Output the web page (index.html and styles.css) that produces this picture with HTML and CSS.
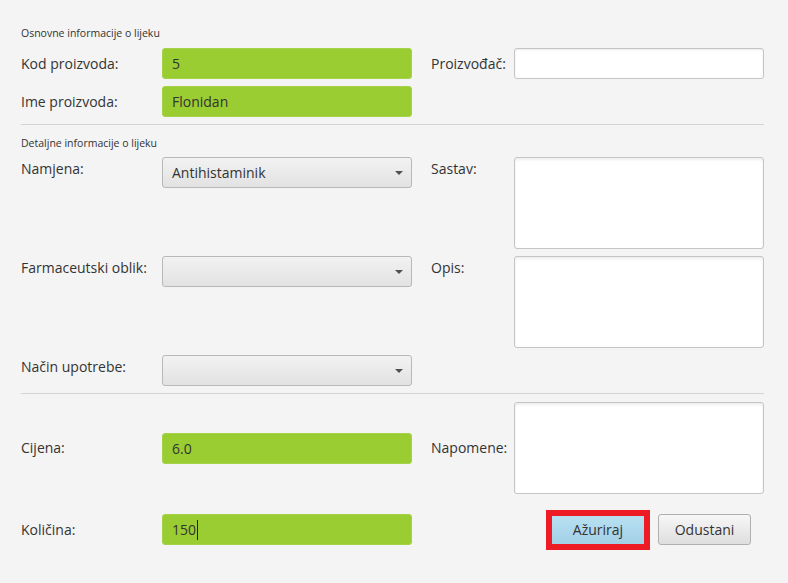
FILE: index.html
```html
<!DOCTYPE html>
<html lang="hr">
<head>
<meta charset="utf-8">
<title>Lijek</title>
<link rel="stylesheet" href="styles.css">
</head>
<body>
<div class="page">
  <div class="section-title first">Osnovne informacije o lijeku</div>
  <div class="grid basic">
    <div class="label mid c1 r1">Kod proizvoda:</div>
    <div class="field green c2 r1">5</div>
    <div class="label mid c4 r1">Proizvođač:</div>
    <div class="field white c5 r1"></div>
    <div class="label mid c1 r2">Ime proizvoda:</div>
    <div class="field green c2 r2">Flonidan</div>
  </div>
  <div class="sep"></div>
  <div class="section-title">Detaljne informacije o lijeku</div>
  <div class="grid detail">
    <div class="label top c1 r1">Namjena:</div>
    <div class="combo c2 r1"><span>Antihistaminik</span><i class="arrow"></i></div>
    <div class="label top c4 r1">Sastav:</div>
    <div class="area c5 r1"></div>
    <div class="label top c1 r2">Farmaceutski oblik:</div>
    <div class="combo c2 r2"><span></span><i class="arrow"></i></div>
    <div class="label top c4 r2">Opis:</div>
    <div class="area c5 r2"></div>
    <div class="label top c1 r3">Način upotrebe:</div>
    <div class="combo c2 r3"><span></span><i class="arrow"></i></div>
  </div>
  <div class="sep second"></div>
  <div class="grid extra">
    <div class="label mid c1 r1">Cijena:</div>
    <div class="field green c2 r1 center">6.0</div>
    <div class="label mid c4 r1">Napomene:</div>
    <div class="area c5 r1"></div>
    <div class="label mid c1 r2">Količina:</div>
    <div class="field green c2 r2">150<span class="caret"></span></div>
    <div class="buttons r2">
      <span class="highlight"><button class="btn primary">Ažuriraj</button></span>
      <button class="btn">Odustani</button>
    </div>
  </div>
</div>
</body>
</html>
```

FILE: styles.css
```css
html, body {
  margin: 0;
  padding: 0;
  background: #f4f4f4;
}

body {
  font-family: "Open Sans", "Noto Sans", sans-serif;
  color: #333333;
  width: 788px;
  height: 583px;
  overflow: hidden;
}

.page {
  padding: 26px 0 0 21px;
  width: 743px;
}

.section-title {
  font-size: 10.5px;
  line-height: 15px;
  height: 15px;
  margin: 11px 0 6px;
  color: #333;
  white-space: nowrap;
}

.section-title.first {
  margin: 0 0 7px;
}

.grid {
  display: grid;
  grid-template-columns: 141px 250px 19px 83px 250px;
}

.basic {
  grid-template-rows: 31px 31px;
  row-gap: 7px;
}

.detail {
  grid-template-rows: 92px 92px 31px;
  row-gap: 7px;
}

.extra {
  margin-top: 8px;
  grid-template-rows: 92px 31px;
  row-gap: 20px;
}

.c1 { grid-column: 1; }
.c2 { grid-column: 2; }
.c4 { grid-column: 4; }
.c5 { grid-column: 5; }
.r1 { grid-row: 1; }
.r2 { grid-row: 2; }
.r3 { grid-row: 3; }

.sep {
  height: 1px;
  background: #d4d4d4;
  margin-top: 7px;
}

.label {
  font-size: 14px;
  line-height: 20px;
  white-space: nowrap;
  color: #333;
}

.label.mid {
  align-self: center;
}

.label.top {
  align-self: start;
  padding-top: 2px;
}

.field {
  box-sizing: border-box;
  height: 31px;
  border-radius: 3px;
  padding: 0 9px;
  font-size: 14px;
  line-height: 31px;
  color: #333;
  display: flex;
  align-items: center;
}

.field.green {
  background: #9acd32;
  border: 1px solid #a6d24a;
}

.field.white {
  background: #ffffff;
  border: 1px solid #c4c4c4;
  box-shadow: inset 0 1px 2px rgba(0, 0, 0, 0.08);
}

.field.center {
  align-self: center;
}

.caret {
  display: inline-block;
  width: 1px;
  height: 20px;
  background: #222;
  margin-left: 1px;
}

.combo {
  box-sizing: border-box;
  height: 31px;
  border: 1px solid #b8b8b8;
  border-radius: 3px;
  background: linear-gradient(#f2f2f2, #e2e2e2);
  display: flex;
  align-items: center;
  justify-content: space-between;
  padding: 0 8px 0 9px;
  font-size: 14px;
  color: #333;
  align-self: start;
}

.arrow {
  width: 0;
  height: 0;
  border-left: 4px solid transparent;
  border-right: 4px solid transparent;
  border-top: 4px solid #505050;
}

.area {
  box-sizing: border-box;
  background: #ffffff;
  border: 1px solid #c4c4c4;
  border-radius: 3px;
  box-shadow: inset 0 2px 3px rgba(0, 0, 0, 0.07);
}

.buttons {
  grid-column: 4 / 6;
  align-self: center;
  display: flex;
  align-items: center;
  justify-content: flex-end;
  gap: 8px;
  padding-right: 13px;
}

.highlight {
  display: inline-flex;
  border: 6px solid #ed1c24;
}

.btn {
  box-sizing: border-box;
  width: 93px;
  height: 31px;
  border: 1px solid #b0b0b0;
  border-radius: 3px;
  background: linear-gradient(#f7f7f7, #dedede);
  font-family: "Open Sans", "Noto Sans", sans-serif;
  font-size: 14px;
  color: #333;
  padding: 0;
  margin: 0;
}

.btn.primary {
  width: 92px;
  height: 28px;
  border: none;
  border-radius: 0;
  background: linear-gradient(#b8e0f2, #a3d0e6);
}
```
